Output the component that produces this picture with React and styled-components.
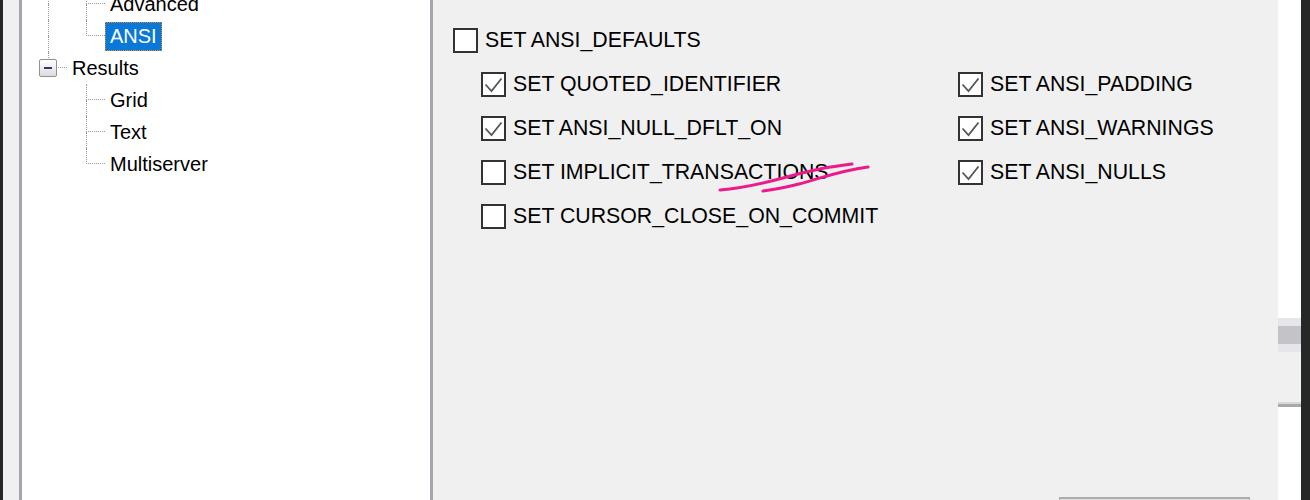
import React from "react";
import styled, { createGlobalStyle } from "styled-components";

const GlobalStyle = createGlobalStyle`
  html, body {
    margin: 0;
    padding: 0;
    overflow: hidden;
    background: #262827;
  }
  body {
    font-family: "Liberation Sans", Arial, sans-serif;
  }
`;

const Frame = styled.div`
  display: flex;
  width: 1310px;
  height: 500px;
  overflow: hidden;
`;

const DarkEdge = styled.div`
  width: ${(p) => p.w}px;
  flex-shrink: 0;
  background: #262827;
`;

const Gutter = styled.div`
  width: 16px;
  flex-shrink: 0;
  background: #f0f0f0;
`;

const TreePanel = styled.div`
  width: 408px;
  flex-shrink: 0;
  background: #ffffff;
  border-left: 3px solid #a3a5ad;
  border-right: 3px solid #a3a5ad;
  overflow: hidden;
`;

const TreeList = styled.ul`
  list-style: none;
  margin: -12px 0 0 0;
  padding: 0 0 0 7px;
`;

const TreeRow = styled.li`
  display: flex;
  align-items: center;
  height: 32px;
`;

const Spacer = styled.div`
  width: 38px;
  height: 32px;
  flex-shrink: 0;
  display: flex;
  flex-direction: column;
  position: relative;
`;

const HalfTop = styled.div`
  height: 16px;
  margin-left: 19px;
  border-left: ${(p) => (p.$v ? "1px dotted #9a9a9a" : "none")};
  border-bottom: ${(p) => (p.$h ? "1px dotted #9a9a9a" : "none")};
  box-sizing: border-box;
  margin-right: ${(p) => (p.$h ? "0" : "19px")};
`;

const HalfBottom = styled.div`
  height: 16px;
  margin-left: 19px;
  border-left: ${(p) => (p.$v ? "1px dotted #9a9a9a" : "none")};
`;

const Expander = styled.div`
  position: absolute;
  left: 10px;
  top: 7px;
  width: 18px;
  height: 18px;
  box-sizing: border-box;
  border: 1px solid #919191;
  border-radius: 2px;
  background: linear-gradient(#ffffff, #dcdcdc);
  display: flex;
  align-items: center;
  justify-content: center;
  &::after {
    content: "";
    width: 8px;
    height: 2px;
    background: #2a3a6a;
  }
`;

const TreeLabel = styled.span`
  font-size: 20px;
  line-height: 29px;
  padding: 0 5px 0 5px;
  color: ${(p) => (p.$selected ? "#ffffff" : "#000000")};
  background: ${(p) => (p.$selected ? "#0a78d7" : "transparent")};
  outline: ${(p) => (p.$selected ? "1px dotted #e08a2a" : "none")};
  outline-offset: -1px;
  white-space: nowrap;
`;

const Content = styled.div`
  flex: 1;
  background: #f0f0f0;
  position: relative;
  display: flex;
  flex-direction: column;
  padding: 18px 0 0 20px;
  box-sizing: border-box;
`;

const CheckRow = styled.label`
  display: flex;
  align-items: center;
  gap: 7px;
  height: 44px;
  font-size: 21.3px;
  color: #000;
  white-space: nowrap;
`;

const Box = styled.span`
  width: 25px;
  height: 25px;
  box-sizing: border-box;
  border: 2px solid #333333;
  background: #ffffff;
  flex-shrink: 0;
  display: flex;
  align-items: center;
  justify-content: center;
`;

const SubGrid = styled.div`
  display: flex;
  margin-left: 28px;
`;

const Column = styled.div`
  display: flex;
  flex-direction: column;
  width: ${(p) => p.w || "auto"};
`;

const Footer = styled.div`
  margin-top: auto;
  height: 3px;
  overflow: hidden;
  display: flex;
  justify-content: flex-end;
  padding-right: 28px;
`;

const Button = styled.button`
  width: 191px;
  height: 30px;
  border: 1px solid #adadad;
  border-top-width: 2px;
  background: #e1e1e1;
  flex-shrink: 0;
`;

const Scribble = styled.svg`
  position: absolute;
  left: 280px;
  top: 155px;
  pointer-events: none;
`;

const ScrollStrip = styled.div`
  width: 23px;
  flex-shrink: 0;
  background: #ffffff;
  display: flex;
  flex-direction: column;
`;

const Track = styled.div`
  margin-top: 318px;
  height: 34px;
  background: #e6e6ea;
  display: flex;
  align-items: center;
`;

const Thumb = styled.div`
  height: 18px;
  width: 100%;
  background: #c3c3c8;
`;

const Gap = styled.div`
  height: 50px;
  background: #f0f0f0;
  border-bottom: 2px solid #d8d8d8;
`;

const Rule = styled.div`
  height: 3px;
  background: #a9a9a9;
`;

function Check({ checked }) {
  return (
    <Box>
      {checked && (
        <svg width="21" height="21" viewBox="0 0 21 21">
          <polyline
            points="2.5,10.5 8.5,17 18.5,4.5"
            fill="none"
            stroke="#575757"
            strokeWidth="1.8"
          />
        </svg>
      )}
    </Box>
  );
}

function Option({ label, checked }) {
  return (
    <CheckRow>
      <Check checked={checked} />
      {label}
    </CheckRow>
  );
}

// guide cell per level: v = vertical line ("full" | "top" | none), h = branch
function Guide({ v, h, expander }) {
  return (
    <Spacer>
      <HalfTop $v={!!v} $h={h} />
      <HalfBottom $v={v === "full"} />
      {expander && <Expander />}
    </Spacer>
  );
}

const treeRows = [
  { label: "Advanced", guides: [{ v: "full" }, { v: "full", h: true }] },
  { label: "ANSI", selected: true, guides: [{ v: "full" }, { v: "top", h: true }] },
  { label: "Results", guides: [{ v: "top", h: true, expander: true }] },
  { label: "Grid", guides: [{}, { v: "full", h: true }] },
  { label: "Text", guides: [{}, { v: "full", h: true }] },
  { label: "Multiserver", guides: [{}, { v: "top", h: true }] },
];

const leftOptions = [
  { label: "SET QUOTED_IDENTIFIER", checked: true },
  { label: "SET ANSI_NULL_DFLT_ON", checked: true },
  { label: "SET IMPLICIT_TRANSACTIONS", checked: false },
  { label: "SET CURSOR_CLOSE_ON_COMMIT", checked: false },
];

const rightOptions = [
  { label: "SET ANSI_PADDING", checked: true },
  { label: "SET ANSI_WARNINGS", checked: true },
  { label: "SET ANSI_NULLS", checked: true },
];

export default function App() {
  return (
    <>
      <GlobalStyle />
      <Frame>
        <DarkEdge w={3} />
        <Gutter />
        <TreePanel>
          <TreeList>
            {treeRows.map((row) => (
              <TreeRow key={row.label}>
                {row.guides.map((g, i) => (
                  <Guide key={i} {...g} />
                ))}
                <TreeLabel $selected={row.selected}>{row.label}</TreeLabel>
              </TreeRow>
            ))}
          </TreeList>
        </TreePanel>
        <Content>
          <Option label="SET ANSI_DEFAULTS" checked={false} />
          <SubGrid>
            <Column w="477px">
              {leftOptions.map((o) => (
                <Option key={o.label} {...o} />
              ))}
            </Column>
            <Column>
              {rightOptions.map((o) => (
                <Option key={o.label} {...o} />
              ))}
            </Column>
          </SubGrid>
          <Footer>
            <Button />
          </Footer>
          <Scribble width="165" height="45" viewBox="0 0 165 45">
            <path
              d="M7 35 C20 34, 37 32, 70 23 S115 12, 139 9"
              fill="none"
              stroke="#ee1a8c"
              strokeWidth="3"
              strokeLinecap="round"
            />
            <path
              d="M50 36 C58 35, 66 34, 86 29 S125 16, 155 12"
              fill="none"
              stroke="#ee1a8c"
              strokeWidth="3"
              strokeLinecap="round"
            />
          </Scribble>
        </Content>
        <ScrollStrip>
          <Track>
            <Thumb />
          </Track>
          <Gap />
          <Rule />
        </ScrollStrip>
        <DarkEdge w={9} />
      </Frame>
    </>
  );
}
